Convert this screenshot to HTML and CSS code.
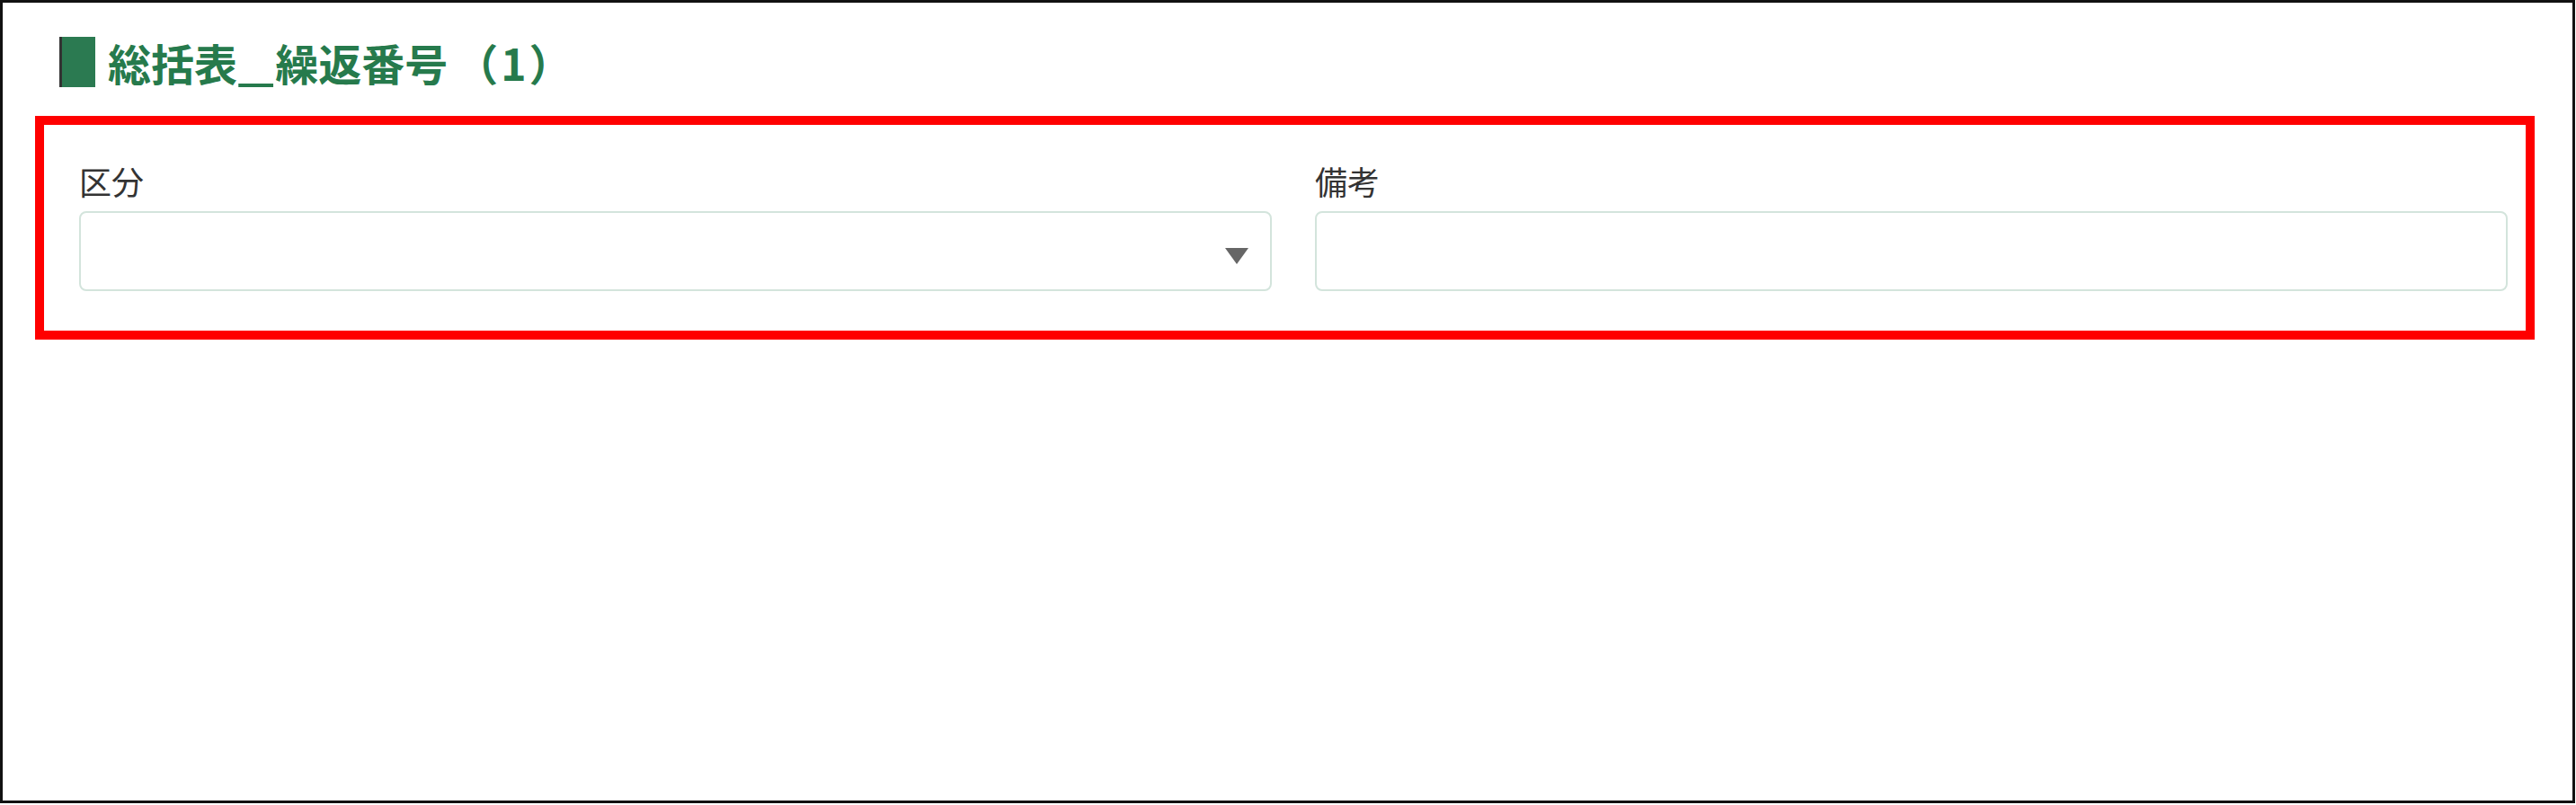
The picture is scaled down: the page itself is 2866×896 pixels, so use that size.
FILE: index.html
```html
<!DOCTYPE html>
<html lang="ja">
<head>
    <meta charset="UTF-8">
    <title>総括表_繰返番号（1）</title>
    <link rel="stylesheet" href="styles.css">
</head>
<body>
    <div class="frame">
        <div class="section-title">
            <span class="title-bar"></span>
            <h2>総括表<span class="under">_</span>繰返番号<span class="title-no">（1）</span></h2>
        </div>

        <div class="highlight">
            <div class="field">
                <label>区分</label>
                <div class="select-box">
                    <svg class="arrow" width="26" height="18" viewBox="0 0 26 18"><path d="M0 0 H26 L13 18 Z" fill="#666"/></svg>
                </div>
            </div>
            <div class="field">
                <label for="biko">備考</label>
                <input type="text" id="biko" class="text-box">
            </div>
        </div>
    </div>
</body>
</html>
```

FILE: styles.css
```css
body { margin: 0; background: #fff; font-family: "Noto Sans CJK JP", "Noto Sans", sans-serif; }
.frame { width: 2865px; height: 894px; box-sizing: border-box; border: 3px solid #111; padding: 38px 0 0 36px; background: #fff; }

.section-title { display: flex; align-items: center; margin-left: 27px; height: 56px; }
.title-bar { width: 37px; height: 56px; background: #2b7a51; border-left: 3px solid #333; margin-right: 14px; }
.section-title h2 { margin: 0; font-size: 48px; line-height: 56px; font-weight: bold; color: #267a4c; }
.under { display: inline-block; transform: scaleX(1.5); margin: 0 8px 0 7px; }
.title-no { margin-left: 8px; letter-spacing: 3px; }

.highlight { width: 2781px; height: 249px; box-sizing: border-box; margin-top: 32px; border: 10px solid #ff0000; padding: 38px 20px 0 39px; display: grid; grid-template-columns: 1fr 1fr; column-gap: 48px; }
.field label { display: block; font-size: 36px; line-height: 48px; color: #333; margin-bottom: 10px; }
.select-box, .text-box { display: flex; justify-content: flex-end; align-items: center; width: 100%; height: 89px; box-sizing: border-box; border: 2px solid #d3e4dc; border-radius: 8px; background: #fff; padding: 0 24px 0 0; margin: 0; font: inherit; }
.arrow { margin-top: 10px; }
```
